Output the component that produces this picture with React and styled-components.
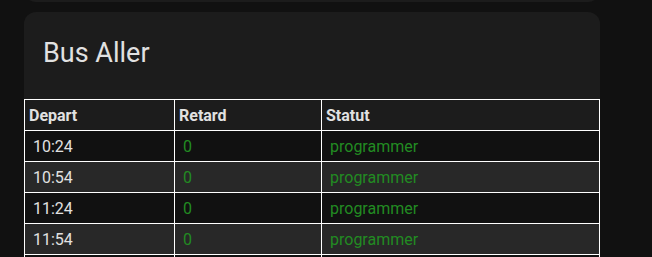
import React from "react";
import styled, { createGlobalStyle } from "styled-components";

const GlobalStyle = createGlobalStyle`
  html, body {
    margin: 0;
    padding: 0;
    overflow: hidden;
    background-color: #111111;
    font-family: Roboto, "Liberation Sans", sans-serif;
  }
`;

const Page = styled.main`
  display: flex;
  flex-direction: column;
  gap: 10px;
  width: 576px;
  margin-left: 24px;
`;

const PrevCard = styled.div`
  height: 40px;
  margin-top: -38px;
  border-radius: 12px;
  background-color: #1c1c1c;
`;

const Card = styled.section`
  border-radius: 12px 12px 0 0;
  background-color: #1c1c1c;
  overflow: hidden;
`;

const Title = styled.h1`
  margin: 0;
  padding: 25px 16px 30px 19px;
  font-size: 27px;
  line-height: 32px;
  font-weight: 400;
  color: #e1e1e1;
`;

const Table = styled.table`
  width: 576px;
  border-collapse: collapse;
  table-layout: fixed;
  color: #e1e1e1;
  font-size: 16px;
`;

const Head = styled.th`
  height: 30px;
  padding: 0 4px;
  border: 1px solid #ffffff;
  text-align: left;
  font-weight: 700;
  background-color: #1c1c1c;
`;

const Row = styled.tr`
  background-color: ${(p) => (p.$even ? "#282828" : "#111111")};
`;

const Cell = styled.td`
  height: 30px;
  padding: 0 8px;
  border: 1px solid #ffffff;
  color: ${(p) => (p.$ok ? "#228b22" : "#e1e1e1")};
`;

const departs = [
  { time: "10:24", delay: "0", status: "programmer" },
  { time: "10:54", delay: "0", status: "programmer" },
  { time: "11:24", delay: "0", status: "programmer" },
  { time: "11:54", delay: "0", status: "programmer" },
  { time: "12:24", delay: "0", status: "programmer" }
];

const App = () => {
  return (
    <>
      <GlobalStyle />
      <Page>
        <PrevCard />
        <Card>
          <Title>Bus Aller</Title>
          <Table>
            <colgroup>
              <col style={{ width: "150px" }} />
              <col style={{ width: "147px" }} />
              <col />
            </colgroup>
            <thead>
              <tr>
                <Head>Depart</Head>
                <Head>Retard</Head>
                <Head>Statut</Head>
              </tr>
            </thead>
            <tbody>
              {departs.map((d, i) => (
                <Row key={d.time} $even={i % 2 === 1}>
                  <Cell>{d.time}</Cell>
                  <Cell $ok>{d.delay}</Cell>
                  <Cell $ok>{d.status}</Cell>
                </Row>
              ))}
            </tbody>
          </Table>
        </Card>
      </Page>
    </>
  );
};

export default App;
